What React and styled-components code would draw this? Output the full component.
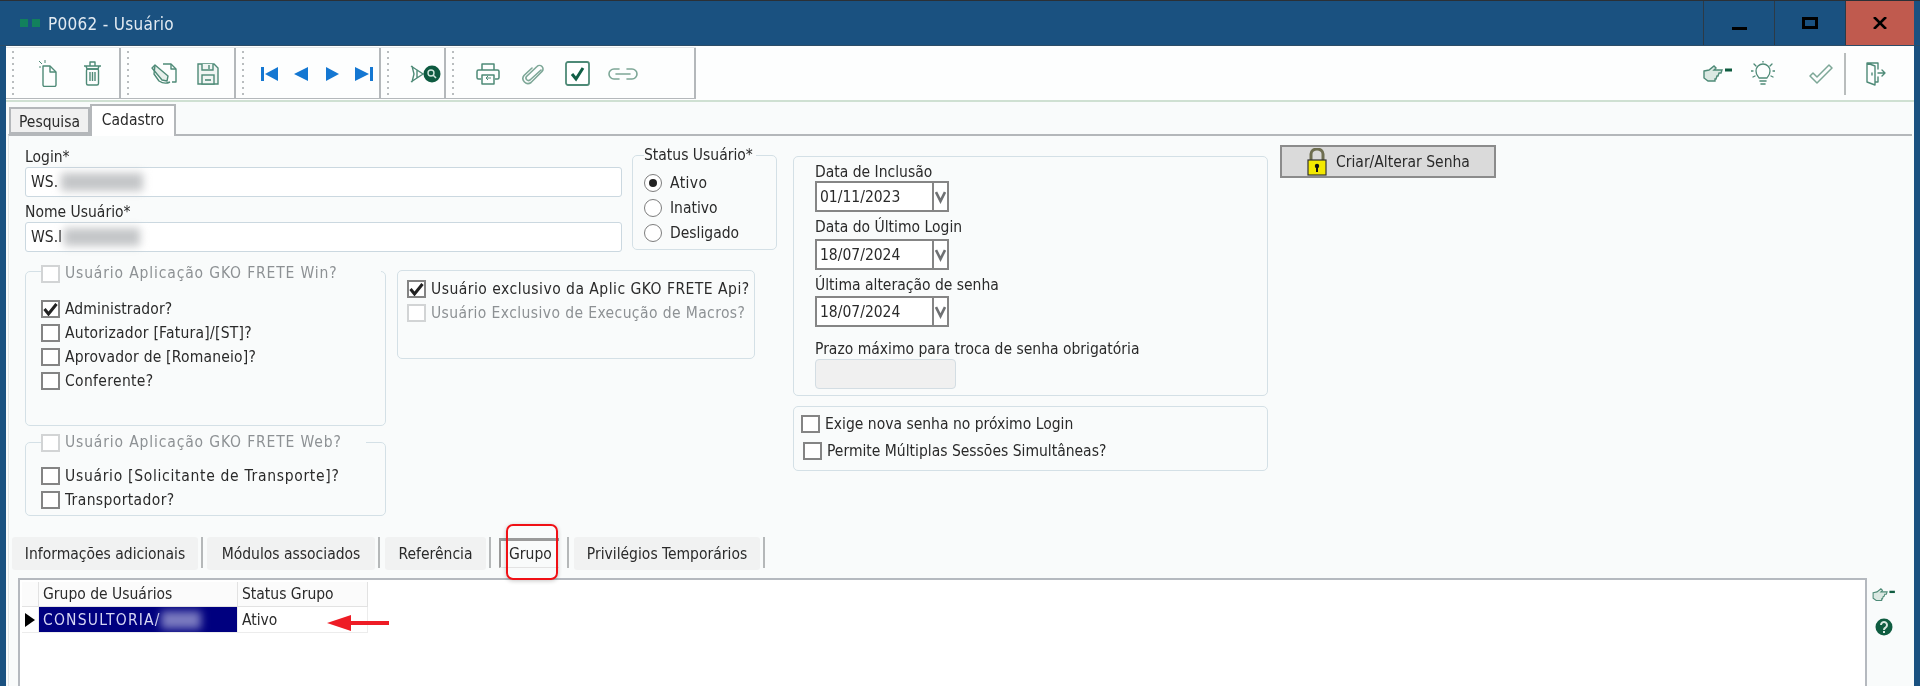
import React from "react";
import styled, { createGlobalStyle } from "styled-components";

const Global = createGlobalStyle`
  html, body { margin: 0; padding: 0; width: 1920px; height: 686px; overflow: hidden; background: #1a5180; }
  * { box-sizing: border-box; }
`;

const Window = styled.div`
  width: 1920px; height: 686px; display: flex; flex-direction: column;
  background: #1a5180; border-top: 1px solid #2b3036; padding: 0 6px; overflow: hidden;
  font-family: "DejaVu Sans Condensed", "Noto Sans", sans-serif; font-size: 15.5px; color: #2a2a2a;
  filter: blur(0.35px);
`;
const TitleBar = styled.div`
  height: 45px; flex: none; margin: 0 -6px; display: flex; align-items: stretch;
  border-bottom: 1px solid #2c4d68;
`;
const Logo = styled.div`
  display: flex; gap: 4px; align-items: center; margin-left: 20px; width: 28px; flex: none;
  i { width: 8px; height: 8px; background: #12805c; display: block; }
`;
const TitleText = styled.div`
  color: #e2eaf1; font-size: 17px; letter-spacing: .3px; align-self: center; flex: 1; margin-top: 1px;
`;
const Controls = styled.div`display: flex; margin-right: 6px;`;
const Control = styled.div`
  width: ${p => p.$w}px; display: flex; align-items: center; justify-content: center;
  border-left: 1px solid #2c3a46; background: ${p => p.$bg || "transparent"};
`;
const MinGlyph = styled.span`width: 15px; height: 3px; background: #000; margin-top: 11px;`;
const MaxGlyph = styled.span`width: 16px; height: 12px; border: 3px solid #000; margin-top: -1px;`;

const Content = styled.div`
  flex: 1; min-height: 0; display: flex; flex-direction: column; background: #f9fbfb;
`;
const Toolbar = styled.div`
  height: 56px; flex: none; display: flex; background: #fdfefe; padding-top: 1px; border-bottom: 2px solid #cfe0d2;
  padding-bottom: 1px; justify-content: space-between;
`;
const ToolGroups = styled.div`display: flex; border-top: 1px solid #e6e8e9; border-bottom: 1px solid #b4b8bb;`;
const ToolGroup = styled.div`
  width: ${p => p.$w}px; display: flex; align-items: center; border-right: 2px solid #b4b8bb;
`;
const Grip = styled.span`
  width: 2px; height: 44px; margin-left: 6px; flex: none;
  background: repeating-linear-gradient(to bottom, #b9bdbf 0 2px, transparent 2px 6px);
`;
const ToolSlots = styled.div`display: flex; margin-left: ${p => p.$pad}px; margin-top: 1px;`;
const ToolSlot = styled.div`
  width: ${p => p.$w}px; display: flex; justify-content: center; align-items: center; height: 40px;
`;
const RightTools = styled.div`display: flex; align-items: center; height: 53px;`;
const RightSlot = styled.div`
  width: ${p => p.$w}px; margin-left: ${p => p.$ml || 0}px; display: flex; justify-content: center;
`;
const ToolDivider = styled.span`width: 2px; height: 42px; background: #b9bdbd; margin: 0 20px 0 0;`;

const TabRow = styled.div`height: 32px; flex: none; display: flex; align-items: flex-end; padding-left: 3px; position: relative;`;
const MainTab = styled.div`
  display: flex; align-items: center; justify-content: center; width: ${p => p.$w}px;
  height: ${p => (p.$active ? 32 : 27)}px;
  margin-bottom: ${p => (p.$active ? -2 : 0)}px;
  padding: ${p => (p.$active ? "0 0 3px" : "2px 0 0")};
  background: ${p => (p.$active ? "#fff" : "#f0f0f0")};
  border: 2px solid #b4b7ba; border-bottom: ${p => (p.$active ? "none" : "2px solid #b4b7ba")};
  position: relative; z-index: ${p => (p.$active ? 2 : 1)};
`;
const Page = styled.div`
  flex: 1; min-height: 0; margin: 0 2px 0 2px; border-top: 2px solid #b4b7ba; display: flex; flex-direction: column;
  border-left: 1px solid #e2e5e6;
`;
const FormRow = styled.div`display: flex; padding: 9px 0 0 16px; height: 401px; flex: none;`;
const LeftColumn = styled.div`width: 752px; flex: none; display: flex; flex-direction: column;`;
const TopRow = styled.div`display: flex; gap: 10px;`;
const Fields = styled.div`width: 597px; flex: none; display: flex; flex-direction: column;`;
const FieldLabel = styled.div`
  height: ${p => p.$h}px; display: flex; align-items: flex-end; padding-bottom: 1px; line-height: 18px;
`;
const TextInput = styled.div`
  height: 30px; background: #fff; border: 1px solid #cbd8e0; border-radius: 3px; display: flex; align-items: center;
  padding-left: 5px;
`;
const Blurred = styled.span`
  display: inline-block; width: ${p => p.$w}px; height: 18px; margin-left: ${p => p.$ml || 0}px;
  background: ${p => p.$c || "#c4c6c8"}; filter: blur(4px);
`;
const Panel = styled.fieldset`
  margin: ${p => p.$mt || 0}px 0 0 0; padding: ${p => p.$pt || 0}px 0 0 ${p => p.$pl || 0}px;
  width: ${p => p.$w}px; height: ${p => p.$h}px; flex: none; display: block; min-width: 0;
  border: 1px solid #d4e0e6; border-radius: 5px;
`;
const PanelLegend = styled.legend`
  margin-left: 0; padding: ${p => p.$pt || 0}px ${p => p.$pr || 3}px 0 0; display: flex; align-items: center; gap: 5px;
  line-height: 19px; color: ${p => p.$muted ? "#8d9194" : "inherit"};
  letter-spacing: ${p => p.$ls || 0}px;
`;
const RadioRow = styled.div`height: 25px; display: flex; align-items: center; gap: 8px; letter-spacing: ${p => p.$ls || 0}px;`;
const Radio = styled.span`
  width: 18px; height: 18px; border-radius: 50%; border: 1.5px solid #7d7d7d; background: #fff; flex: none;
  display: flex; align-items: center; justify-content: center;
  &::after { content: ""; width: 8px; height: 8px; border-radius: 50%; background: ${p => p.$on ? "#222" : "transparent"}; }
`;
const BottomRow = styled.div`display: flex; gap: 11px;`;
const GroupColumn = styled.div`display: flex; flex-direction: column; width: 361px; flex: none;`;
const CheckRow = styled.div`
  height: 24px; display: flex; align-items: center; gap: 5px; margin-left: ${p => p.$ml || 0}px;
  margin-top: ${p => p.$mt || 0}px; white-space: nowrap; letter-spacing: ${p => p.$ls || 0}px;
  color: ${p => p.$muted ? "#8d9194" : "inherit"};
`;
const Check = styled.span`
  width: 19px; height: 18px; flex: none; background: #fff; display: flex; align-items: center; justify-content: center;
  border: 2px solid ${p => p.$muted ? "#d2d4d5" : "#848484"};
  svg { display: block; }
`;
const ApiBox = styled.div`
  width: 358px; height: 89px; margin-top: 18px; border: 1px solid #d4e0e6; border-radius: 5px;
  padding: 6px 0 0 9px;
`;
const DatesColumn = styled.div`width: 475px; flex: none; margin: 11px 0 0 16px; display: flex; flex-direction: column; gap: 10px;`;
const Box = styled.div`
  height: ${p => p.$h}px; border: 1px solid #d4e0e6; border-radius: 5px; padding: ${p => p.$pad};
  display: flex; flex-direction: column;
`;
const DateLabel = styled.div`
  height: ${p => p.$h}px; display: flex; align-items: center; margin-top: ${p => p.$mt || 0}px;
  padding-top: ${p => p.$pt || 0}px; white-space: nowrap;
`;
const DateField = styled.div`
  width: 134px; height: 31px; border: 2px solid #858585; background: #fff; display: flex; flex: none;
`;
const DateText = styled.div`flex: 1; display: flex; align-items: center; padding-left: 3px;`;
const DateDrop = styled.div`
  width: 15px; border-left: 2px solid #858585; display: flex; align-items: center; justify-content: center;
`;
const DisabledInput = styled.div`
  width: 141px; height: 30px; background: #f0f0f0; border: 1px solid #d3dde3; border-radius: 4px; flex: none;
`;
const LockButton = styled.div`
  width: 216px; height: 33px; flex: none; margin: 0 0 0 12px; background: #dadada; border: 2px solid #8b8b8b;
  display: flex; align-items: center; padding-left: 25px; gap: 9px;
`;
const SubTabs = styled.div`
  height: 33px; flex: none; display: flex; margin: 0 0 0 3px; align-items: stretch;
`;
const SubTab = styled.div`
  width: ${p => p.$w}px; flex: none; background: #f1f2f2; border-radius: 3px; display: flex; align-items: center; justify-content: center;
`;
const SubSep = styled.span`width: 2px; height: 31px; background: #b5b8b9; margin: 0 ${p => p.$r}px 0 ${p => p.$l || 3}px; flex: none;`;
const ActiveSubTab = styled.div`
  width: 60px; flex: none; border-top: 3px solid #9a9a9a; border-left: 2px solid #9a9a9a; height: 30px; margin-top: 1px;
  border-bottom: 1px solid #e3e3e3;
  display: flex; align-items: center; padding-left: 8px; position: relative;
`;
const RedHighlight = styled.span`
  position: absolute; left: 5px; top: -17px; width: 52px; height: 56px; border: 2px solid #f01015; border-radius: 7px;
  box-shadow: 0 1px 4px rgba(0,0,0,.22);
`;
const GridRow = styled.div`flex: 1; min-height: 0; display: flex; margin: 8px 0 0 9px;`;
const GridPanel = styled.div`
  width: 1849px; flex: none; background: #fff; border: 2px solid #b5b9bf; border-bottom: none; padding: 2px 0 0 2px;
`;
const GridTable = styled.div`display: grid; grid-template-columns: 17px 199px 130px; width: 346px;`;
const HeadCell = styled.div`
  height: 25px; background: #fbfbfb; border-right: 1px solid #e2e2e2; border-bottom: 1px solid #e2e2e2;
  padding-left: 4px; display: flex; align-items: center;
`;
const BodyCell = styled.div`
  height: 26px; background: ${p => p.$sel ? "#00007f" : "#fff"}; color: ${p => p.$sel ? "#d6d6f4" : "inherit"};
  letter-spacing: ${p => p.$sel ? 1.2 : 0}px;
  border-right: 1px solid #ececec; border-bottom: 1px solid #ececec;
  padding-left: 4px; display: flex; align-items: center; white-space: nowrap; overflow: hidden;
`;
const IndicatorCell = styled(BodyCell)`padding-left: 3px;`;
const Arrow = styled.svg`position: absolute; left: 327px; top: 613px;`;
const SideIcons = styled.div`width: 34px; display: flex; flex-direction: column; align-items: center; gap: 16px; padding-top: 10px; flex: none;`;

const G = "#4e8a77";

const Icon = ({ w, h, rw, rh, children, fill = "none", sw = 1.5, stroke = G }) => (
  <svg width={rw || w} height={rh || h} viewBox={`0 0 ${w} ${h}`} preserveAspectRatio="none" fill={fill} stroke={stroke} strokeWidth={sw} strokeLinecap="round" strokeLinejoin="round">
    {children}
  </svg>
);

const NewDoc = () => (
  <svg width="18" height="27" viewBox="0 0 18 27" fill="none" stroke={G} strokeWidth="1.4" strokeLinejoin="round">
    <path d="M4 6h7l6 6v13a1.5 1.5 0 0 1-1.5 1.5h-10A1.5 1.5 0 0 1 4 25z" />
    <path d="M11 6v6h6" />
    <path d="M0 1l3 3M6 0v3M0 7h2" strokeWidth="1" />
  </svg>
);
const Trash = () => (
  <svg width="19" height="25" viewBox="0 0 19 25" fill="none" stroke={G} strokeWidth="1.4" strokeLinejoin="round">
    <path d="M1 5h17M7 5V1h5v4M3 5l1 3h11l1-3" />
    <rect x="3.5" y="8" width="12" height="16" rx="1.5" />
    <path d="M7 11v9M9.5 11v9M12 11v9" />
  </svg>
);
const Sign = () => (
  <svg width="26" height="22" viewBox="0 0 26 22" fill="none" stroke={G} strokeWidth="1.4" strokeLinejoin="round">
    <path d="M12 1h8l5 5v13h-4" />
    <path d="M20 1v5h5" />
    <path d="M1 5l3-3 13 11-1 5-5-1z" fill="#e6efeb" />
    <path d="M4 2l-1 9 5 7c3 2 7 3 11 1" />
  </svg>
);
const Floppy = () => (
  <svg width="22" height="22" viewBox="0 0 22 22" fill="#f0f5f3" stroke={G} strokeWidth="1.4">
    <path d="M1 1h16l4 4v16H1z" />
    <path d="M5 1v6h11V1M12 2v4" />
    <rect x="5" y="12" width="12" height="9" />
    <path d="M8 17h6" strokeWidth="1.6" />
  </svg>
);
const NavIcon = ({ kind, w }) => (
  <svg width={w} height="14" viewBox={`0 0 ${w} 14`} fill="#1477d2">
    {kind === "first" && <><rect x="0" y="0" width="3" height="14" /><path d={`M${w} 0v14L4 7z`} /></>}
    {kind === "prev" && <path d={`M${w} 0v14L0 7z`} />}
    {kind === "next" && <path d={`M0 0v14l${w}-7z`} />}
    {kind === "last" && <><rect x={w - 3} y="0" width="3" height="14" /><path d={`M0 0v14l${w - 4}-7z`} /></>}
  </svg>
);
const SearchIcon = () => (
  <svg width="31" height="18" viewBox="0 0 31 18" fill="none" stroke={G} strokeWidth="1.4">
    <path d="M1 1l6 4v8l-6 4M2 1l2 8-2 8M7 5l6 4-6 4" />
    <circle cx="22" cy="9" r="8.5" fill="#0d5a40" stroke="none" />
    <circle cx="21" cy="8" r="3" stroke="#cfe6dc" strokeWidth="1.4" />
    <path d="M23 10l3 3" stroke="#cfe6dc" strokeWidth="1.6" />
  </svg>
);
const Printer = () => (
  <svg width="24" height="22" viewBox="0 0 24 22" fill="none" stroke={G} strokeWidth="1.5" strokeLinejoin="round">
    <path d="M6 7V1h12v6" />
    <path d="M5 16H2.5A1.5 1.5 0 0 1 1 14.5v-6A1.5 1.5 0 0 1 2.5 7h19A1.5 1.5 0 0 1 23 8.5v6a1.5 1.5 0 0 1-1.5 1.5H19" />
    <path d="M6 12h12v9H6z" />
    <path d="M15 15h-5m0 0l2-2m-2 2l2 2" strokeWidth="1" />
  </svg>
);
const Clip = () => (
  <svg width="22" height="22" viewBox="0 0 22 22" fill="none" stroke="#7da797" strokeWidth="1.6" strokeLinecap="round">
    <path d="M19 7L8 17a2.5 2.5 0 0 1-3.5-3.5L15 3.5a3.5 3.5 0 0 1 5 5L9 19.5a5 5 0 0 1-7-7L10 5" />
  </svg>
);
const CheckDoc = () => (
  <svg width="25" height="25" viewBox="0 0 25 25" fill="#fff" stroke={G} strokeWidth="1.8">
    <rect x="1" y="1" width="23" height="23" rx="2" />
    <path d="M7 13l4 5 7-11" stroke="#115f46" strokeWidth="3" fill="none" />
  </svg>
);
const LinkIcon = () => (
  <Icon w={30} h={12} stroke="#7da797" sw={1.6}>
    <path d="M11 1H6a5 5 0 0 0 0 10h5M19 1h5a5 5 0 0 1 0 10h-5M8 6h14" />
  </Icon>
);
const Hand = ({ w = 30, h = 18 }) => (
  <svg width={w} height={h} viewBox="0 0 30 18" fill="none" stroke={G} strokeWidth="1.4">
    <path d="M1 6l5-1 5-4 2 2-2 2h8l-1 3h-2l-1 3h-1l-1 3h-1v2H5l-4-3z" fill="#dbe8e2" />
    <path d="M22 5h7" stroke="#0f5c40" strokeWidth="3" />
  </svg>
);
const Bulb = () => (
  <Icon w={24} h={26} sw={1.3}>
    <path d="M8 17c-1-2-3-3-3-7a7 7 0 0 1 14 0c0 4-2 5-3 7z" />
    <path d="M9 20h6M10 23h4" strokeWidth="1.6" />
    <path d="M12 0v1M3 3l2 2M21 3l-2 2M0 10h2M22 10h2M2 16l2-1M22 16l-2-1" />
  </Icon>
);
const CheckMark = () => (
  <Icon w={24} h={20} stroke="#7da797" sw={1.5}>
    <path d="M1 12l3-3 4 4L20 1l3 3L8 19z" />
  </Icon>
);
const Exit = () => (
  <Icon w={20} h={24} sw={1.4}>
    <path d="M12 7V1H1v19l8 3V4L1 1M9 20h3v-5" />
    <path d="M12 11h7m-3-3l3 3-3 3" />
    <path d="M6 11v2" />
  </Icon>
);
const Help = () => (
  <svg width="18" height="18" viewBox="0 0 18 18">
    <circle cx="9" cy="9" r="8.5" fill="#0f5c40" />
    <path d="M6 7a3 3 0 1 1 4.5 2.6C9.4 10.2 9 10.8 9 12" fill="none" stroke="#d8e8e0" strokeWidth="2" />
    <rect x="8" y="13" width="2" height="2" fill="#d8e8e0" />
  </svg>
);
const Lock = () => (
  <svg width="20" height="28" viewBox="0 0 20 28">
    <path d="M4 13V6a6 5 0 0 1 12 0v7" fill="none" stroke="#6e6e50" strokeWidth="3" />
    <rect x="1" y="12" width="18" height="15" fill="#f3e800" stroke="#333" strokeWidth="1.2" />
    <circle cx="10" cy="18" r="2.2" fill="#111" />
    <rect x="9" y="18" width="2" height="6" fill="#111" />
  </svg>
);
const CheckTick = () => (
  <svg width="15" height="14" viewBox="0 0 15 14"><path d="M1.5 7l4 5L13.5 2" fill="none" stroke="#222" strokeWidth="3" /></svg>
);
const Chevron = () => (
  <svg width="11" height="14" viewBox="0 0 11 14"><path d="M1 2l4.5 9L10 2" fill="none" stroke="#6f7173" strokeWidth="2.6" /></svg>
);

const CheckItem = ({ label, on, muted, ml, mt, ls }) => (
  <CheckRow $muted={muted} $ml={ml} $mt={mt} $ls={ls}>
    <Check $muted={muted}>{on && <CheckTick />}</Check>
    {label}
  </CheckRow>
);

const DateInput = ({ value }) => (
  <DateField>
    <DateText>{value}</DateText>
    <DateDrop><Chevron /></DateDrop>
  </DateField>
);

export default function App() {
  return (
    <>
      <Global />
      <Window>
        <TitleBar>
          <Logo><i /><i /></Logo>
          <TitleText>P0062 - Usuário</TitleText>
          <Controls>
            <Control $w={71}><MinGlyph /></Control>
            <Control $w={71}><MaxGlyph /></Control>
            <Control $w={69} $bg="#c05a4e">
              <svg width="14" height="12" viewBox="0 0 14 12"><path d="M1 0l12 12M13 0L1 12" stroke="#000" strokeWidth="2.6" /></svg>
            </Control>
          </Controls>
        </TitleBar>
        <Content>
          <Toolbar>
            <ToolGroups>
              <ToolGroup $w={115}><Grip />
                <ToolSlots $pad={11}>
                  <ToolSlot $w={45}><NewDoc /></ToolSlot><ToolSlot $w={45}><Trash /></ToolSlot>
                </ToolSlots>
              </ToolGroup>
              <ToolGroup $w={115}><Grip />
                <ToolSlots $pad={13}>
                  <ToolSlot $w={44}><Sign /></ToolSlot><ToolSlot $w={44}><Floppy /></ToolSlot>
                </ToolSlots>
              </ToolGroup>
              <ToolGroup $w={145}><Grip />
                <ToolSlots $pad={9}>
                  <ToolSlot $w={32}><NavIcon kind="first" w={17} /></ToolSlot><ToolSlot $w={31}><NavIcon kind="prev" w={14} /></ToolSlot>
                  <ToolSlot $w={32}><NavIcon kind="next" w={13} /></ToolSlot><ToolSlot $w={32}><NavIcon kind="last" w={18} /></ToolSlot>
                </ToolSlots>
              </ToolGroup>
              <ToolGroup $w={65}><Grip />
                <ToolSlots $pad={16}><ToolSlot $w={40}><SearchIcon /></ToolSlot></ToolSlots>
              </ToolGroup>
              <ToolGroup $w={250}><Grip />
                <ToolSlots $pad={11}>
                  <ToolSlot $w={45}><Printer /></ToolSlot><ToolSlot $w={45}><Clip /></ToolSlot>
                  <ToolSlot $w={45}><CheckDoc /></ToolSlot><ToolSlot $w={45}><LinkIcon /></ToolSlot>
                </ToolSlots>
              </ToolGroup>
            </ToolGroups>
            <RightTools>
              <RightSlot $w={46}><Hand /></RightSlot>
              <RightSlot $w={44}><Bulb /></RightSlot>
              <RightSlot $w={46} $ml={13}><CheckMark /></RightSlot>
              <ToolDivider />
              <RightSlot $w={20}><Exit /></RightSlot>
              <RightSlot $w={28} />
            </RightTools>
          </Toolbar>
          <TabRow>
            <MainTab $w={81}>Pesquisa</MainTab>
            <MainTab $w={86} $active>Cadastro</MainTab>
          </TabRow>
          <Page>
            <FormRow>
              <LeftColumn>
                <TopRow>
                  <Fields>
                    <FieldLabel $h={22}>Login*</FieldLabel>
                    <TextInput>WS.<Blurred $w={82} $ml={3} /></TextInput>
                    <FieldLabel $h={25}>Nome Usuário*</FieldLabel>
                    <TextInput>WS.I<Blurred $w={76} $ml={2} /></TextInput>
                  </Fields>
                  <Panel $w={145} $h={104} $mt={1} $pl={11} $pt={5}>
                    <PanelLegend>Status Usuário*</PanelLegend>
                    <RadioRow $ls={0.4}><Radio $on />Ativo</RadioRow>
                    <RadioRow><Radio />Inativo</RadioRow>
                    <RadioRow><Radio />Desligado</RadioRow>
                  </Panel>
                </TopRow>
                <BottomRow>
                  <GroupColumn>
                    <Panel $w={361} $h={167} $mt={7} $pt={14} $pl={15}>
                      <PanelLegend $pt={5} $muted $pr={44} $ls={0.85}>
                        <Check $muted />Usuário Aplicação GKO FRETE Win?
                      </PanelLegend>
                      <CheckItem label="Administrador?" on ls={0.1} />
                      <CheckItem label="Autorizador [Fatura]/[ST]?" ls={0.25} />
                      <CheckItem label="Aprovador de [Romaneio]?" ls={0.2} />
                      <CheckItem label="Conferente?" ls={0.33} />
                    </Panel>
                    <Panel $w={361} $h={83} $mt={7} $pt={12} $pl={15}>
                      <PanelLegend $muted $pr={24} $ls={0.85}>
                        <Check $muted />Usuário Aplicação GKO FRETE Web?
                      </PanelLegend>
                      <CheckItem label="Usuário [Solicitante de Transporte]?" ls={0.7} />
                      <CheckItem label="Transportador?" ls={0.38} />
                    </Panel>
                  </GroupColumn>
                  <ApiBox>
                    <CheckItem label="Usuário exclusivo da Aplic GKO FRETE Api?" on ls={0.48} />
                    <CheckItem label="Usuário Exclusivo de Execução de Macros?" muted ls={0.4} />
                  </ApiBox>
                </BottomRow>
              </LeftColumn>
              <DatesColumn>
                <Box $h={240} $pad="5px 0 0 21px">
                  <DateLabel $h={19}>Data de Inclusão</DateLabel>
                  <DateInput value="01/11/2023" />
                  <DateLabel $h={27} $pt={3}>Data do Último Login</DateLabel>
                  <DateInput value="18/07/2024" />
                  <DateLabel $h={26} $pt={3}>Última alteração de senha</DateLabel>
                  <DateInput value="18/07/2024" />
                  <DateLabel $h={20} $mt={12}>Prazo máximo para troca de senha obrigatória</DateLabel>
                  <DisabledInput />
                </Box>
                <Box $h={65} $pad="5px 0 0 7px">
                  <CheckItem label="Exige nova senha no próximo Login" />
                  <CheckItem label="Permite Múltiplas Sessões Simultâneas?" ml={2} mt={3} />
                </Box>
              </DatesColumn>
              <LockButton><Lock />Criar/Alterar Senha</LockButton>
            </FormRow>
            <SubTabs>
              <SubTab $w={186}>Informações adicionais</SubTab><SubSep $r={4} />
              <SubTab $w={168}>Módulos associados</SubTab><SubSep $r={5} />
              <SubTab $w={101}>Referência</SubTab><SubSep $r={8} />
              <ActiveSubTab>Grupo<RedHighlight /></ActiveSubTab><SubSep $l={8} $r={5} />
              <SubTab $w={186}>Privilégios Temporários</SubTab><SubSep $r={0} />
            </SubTabs>
            <GridRow>
              <GridPanel>
                <GridTable>
                  <HeadCell /><HeadCell>Grupo de Usuários</HeadCell><HeadCell>Status Grupo</HeadCell>
                  <IndicatorCell>
                    <svg width="10" height="14" viewBox="0 0 10 14"><path d="M0 0l10 7-10 7z" fill="#000" /></svg>
                  </IndicatorCell>
                  <BodyCell $sel>CONSULTORIA/<Blurred $w={40} $c="#7a7ac0" /></BodyCell>
                  <BodyCell>Ativo</BodyCell>
                </GridTable>
              </GridPanel>
              <SideIcons><Hand w={24} h={14} /><Help /></SideIcons>
            </GridRow>
          </Page>
        </Content>
        <Arrow width="62" height="18" viewBox="0 0 62 18">
          <path d="M0 9L24 1v6h38v4H24v6z" fill="#ee1c25" />
        </Arrow>
      </Window>
    </>
  );
}
